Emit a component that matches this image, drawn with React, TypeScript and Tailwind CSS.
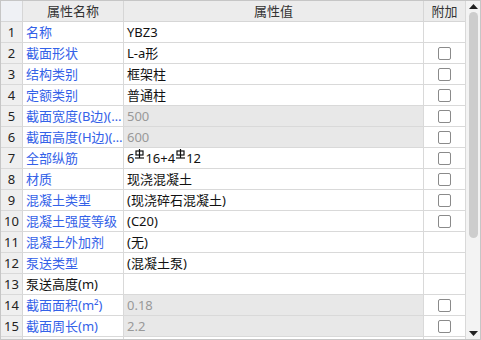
import React from "react"

type Row = {
  name: string
  value: React.ReactNode
  blue?: boolean
  dim?: boolean
  check?: boolean
}

// HRB400 rebar mark, drawn small and raised
function Rebar() {
  return (
    <svg width="9" height="10" viewBox="0 0 9 10" className="mx-[1px] inline-block align-[4px]">
      <rect x="1" y="2" width="7" height="4" fill="none" stroke="#111" strokeWidth="1.2" />
      <line x1="4.5" y1="0" x2="4.5" y2="9" stroke="#111" strokeWidth="1.2" />
      <line x1="0" y1="9" x2="9" y2="9" stroke="#111" strokeWidth="1.2" />
    </svg>
  )
}

const rows: Row[] = [
  { name: "名称", value: "YBZ3", blue: true },
  { name: "截面形状", value: "L-a形", blue: true, check: true },
  { name: "结构类别", value: "框架柱", blue: true, check: true },
  { name: "定额类别", value: "普通柱", blue: true, check: true },
  { name: "截面宽度(B边)(mm)", value: "500", blue: true, dim: true, check: true },
  { name: "截面高度(H边)(mm)", value: "600", blue: true, dim: true, check: true },
  {
    name: "全部纵筋",
    value: (
      <>
        6<Rebar />16+4<Rebar />12
      </>
    ),
    blue: true,
    check: true,
  },
  { name: "材质", value: "现浇混凝土", blue: true, check: true },
  { name: "混凝土类型", value: "(现浇碎石混凝土)", blue: true, check: true },
  { name: "混凝土强度等级", value: "(C20)", blue: true, check: true },
  { name: "混凝土外加剂", value: "(无)", blue: true },
  { name: "泵送类型", value: "(混凝土泵)", blue: true },
  { name: "泵送高度(m)", value: "" },
  { name: "截面面积(m²)", value: "0.18", blue: true, dim: true, check: true },
  { name: "截面周长(m)", value: "2.2", blue: true, dim: true, check: true },
]

export default function App() {
  return (
    <div
      className="flex h-[340px] w-[481px] overflow-hidden border border-[#c6c6c6] bg-white text-[13px] leading-[20px] text-[#111]"
      style={{ fontFamily: '"Noto Sans", "Noto Sans CJK SC", sans-serif' }}
    >
      <div className="w-[464px] overflow-hidden">
        <div className="flex h-[21px] border-b border-[#d6d6d6] bg-[#ececec] text-[#333]">
          <div className="w-[22px] border-r border-[#d6d6d6] bg-[#eff1f5]" />
          <div className="w-[101px] border-r border-[#d6d6d6] text-center">属性名称</div>
          <div className="w-[300px] border-r border-[#d6d6d6] text-center">属性值</div>
          <div className="w-[41px] text-center">附加</div>
        </div>

        {rows.map((row, i) => (
          <div key={i} className="flex h-[21px] border-b border-[#d9d9d9]">
            <div className="w-[22px] border-r border-[#d6d6d6] bg-[#efefef] text-center text-[#222]">
              {i + 1}
            </div>
            <div
              className={`w-[101px] truncate border-r border-[#d9d9d9] pl-[3px] ${
                row.blue ? "text-[#3361e8]" : "text-[#111]"
              }`}
            >
              {row.name}
            </div>
            <div
              className={`w-[300px] truncate border-r border-[#d9d9d9] pl-[3px] ${
                row.dim ? "bg-[#e8e8e8] text-[#999]" : "text-[#111]"
              }`}
            >
              {row.value}
            </div>
            <div className="flex w-[41px] items-center justify-center">
              {row.check && (
                <div className="h-[13px] w-[13px] rounded-[2px] border border-[#8a8a8a] bg-white" />
              )}
            </div>
          </div>
        ))}

        {/* next row, only its top edge shows */}
        <div className="flex h-[21px]">
          <div className="w-[22px] border-r border-[#d6d6d6] bg-[#efefef]" />
          <div className="w-[101px] border-r border-[#d9d9d9]" />
          <div className="w-[300px] border-r border-[#d9d9d9]" />
          <div className="w-[41px]" />
        </div>
      </div>

      <div className="relative flex w-[15px] flex-col items-center border-l border-[#d9d9d9] bg-[#f3f3f3]">
        <svg width="9" height="5" viewBox="0 0 9 5" className="mt-[3px]">
          <path d="M0 5 L4.5 0 L9 5 Z" fill="#222" />
        </svg>
        <div className="mt-[3px] h-[226px] w-[9px] rounded-full bg-[#cdcdcd]" />
        <svg width="9" height="5" viewBox="0 0 9 5" className="absolute bottom-[3px]">
          <path d="M0 0 L9 0 L4.5 5 Z" fill="#222" />
        </svg>
      </div>
    </div>
  )
}
